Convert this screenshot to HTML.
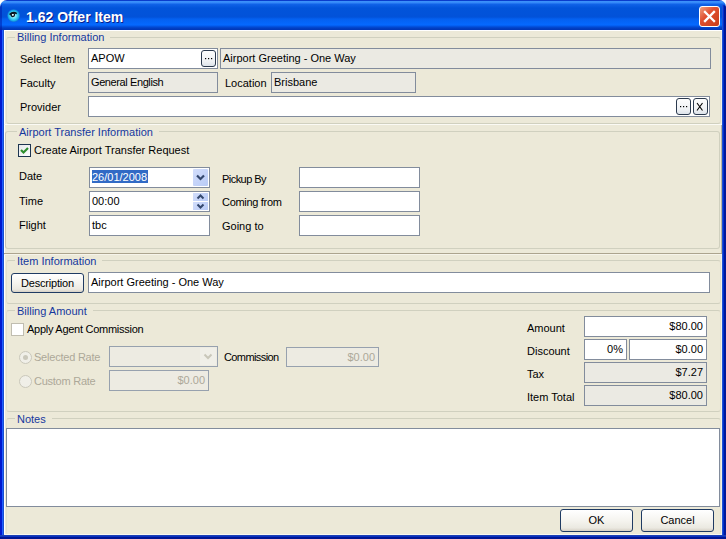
<!DOCTYPE html>
<html><head><meta charset="utf-8">
<style>
*{box-sizing:border-box;margin:0;padding:0}
html,body{width:726px;height:539px;overflow:hidden;background:#fff}
body{position:relative;font-family:"Liberation Sans",sans-serif;font-size:11px;color:#000}
.a{position:absolute}
.t{position:absolute;line-height:13px;white-space:nowrap}
#title{left:0;top:0;width:726px;height:31px;border-radius:7px 7px 0 0;
background:linear-gradient(to bottom,#0a3ccc 0px,#0a3ccc 1px,#3d93fb 1px,#3386f8 3px,#1163e8 4px,#0254da 8px,#0252d9 17px,#0460f0 19px,#0569ff 25px,#0358e8 26px,#0240c4 28px,#0035b5 30px,#0035b5 31px)}
#lb{left:0;top:30px;width:4px;height:509px;background:linear-gradient(to right,#0019cf 0,#0019cf 2px,#1f5fff 2px,#1f5fff 3px,#1a4fd0 3px)}
#rb{left:722px;top:5px;width:4px;height:534px;border-radius:0 3px 0 0;background:linear-gradient(to right,#2050d0 0,#2050d0 1px,#0030d0 1px,#0030d0 2px,#00189a 2px)}
#bb{left:0;top:535px;width:726px;height:4px;background:linear-gradient(to bottom,#1c40b4 0,#1c40b4 1px,#0a32c0 1px,#0a32c0 2px,#001594 2px)}
#client{left:4px;top:30px;width:718px;height:505px;background:#ece9d8}
.panel{position:absolute;left:4px;width:718px;border-top:1px solid #fff;border-left:1px solid #fff;border-bottom:1px solid #aca899;border-right:1px solid #aca899}
.gb{position:absolute;border:1px solid #d0d0bf;border-radius:3px}
.gt{position:absolute;line-height:13px;color:#15389e;background:#ece9d8;padding:0 6px 0 2px;white-space:nowrap}
.tb{position:absolute;background:#fff;border:1px solid #828c9c;line-height:13px;padding:3px 0 0 2px;white-space:nowrap}
.ro{background:#ebeae3}
.dis{background:#edebe2;color:#aca899;border-color:#97a1ae}
.r{text-align:right;padding:3px 3px 0 0}
.btn{position:absolute;border:1px solid #1f3b63;border-radius:3px;background:linear-gradient(to bottom,#fff 0%,#f5f4ef 50%,#ebe9e1 85%,#d6d0c5 100%);text-align:center;line-height:13px}
.sb{position:absolute;border:1px solid #2b3a4e;border-radius:3px;background:linear-gradient(to bottom,#fdfdfd,#eef1f4 70%,#dde3ea)}
.sb svg{position:absolute;left:0;top:0}
</style></head><body>
<div id="title" class="a"></div>
<div id="lb" class="a"></div>
<div id="rb" class="a"></div>
<div id="bb" class="a"></div>
<div id="client" class="a"></div>
<div class="a" style="left:0;top:5px;width:2px;height:25px;background:rgba(0,20,160,0.45);border-radius:2px 0 0 0"></div>

<!-- title content -->
<svg class="a" style="left:5px;top:7px" width="17" height="17" viewBox="0 0 17 17">
<defs><radialGradient id="ig" cx="50%" cy="50%" r="50%"><stop offset="0" stop-color="#d8fcff"/><stop offset="0.45" stop-color="#5ee0fa"/><stop offset="0.8" stop-color="#18b0ea"/><stop offset="1" stop-color="#1070d8"/></radialGradient></defs>
<circle cx="8.6" cy="8.6" r="6.4" fill="url(#ig)"/>
<path d="M4.6 7.6 Q8 4.2 11.8 6.6" stroke="#0a1420" stroke-width="1.5" fill="none"/>
<circle cx="7.8" cy="7.8" r="1.7" fill="none" stroke="#0a1420" stroke-width="1.3"/><circle cx="7.8" cy="7.8" r="0.8" fill="#fff"/>
</svg>
<div class="t" style="left:26px;top:9px;font-size:14px;line-height:17px;font-weight:bold;color:#fff;letter-spacing:0px;text-shadow:1px 1px 0 #0a1e8a">1.62 Offer Item</div>
<div class="a" style="left:699px;top:6px;width:21px;height:21px;border:1px solid #fff;border-radius:3px;background:linear-gradient(135deg,#f0a080 0%,#e05030 40%,#c83c18 100%)">
<svg width="19" height="19" viewBox="0 0 19 19" style="position:absolute;left:0;top:0"><path d="M5 5 L14 14 M14 5 L5 14" stroke="#fff" stroke-width="2.3" stroke-linecap="square"/></svg>
</div>

<!-- panels -->
<div class="a" style="left:4px;top:30px;width:718px;height:1px;background:#fff"></div>
<div class="a" style="left:4px;top:30px;width:1px;height:505px;background:#fff"></div>
<div class="a" style="left:721px;top:31px;width:1px;height:504px;background:#f2f0e6"></div>
<div class="a" style="left:721px;top:124px;width:1px;height:130px;background:#b8b4a2"></div>
<div class="a" style="left:4px;top:124px;width:718px;height:1px;background:#fbfaf4"></div>
<div class="a" style="left:4px;top:253px;width:718px;height:1px;background:#aca48e"></div>
<div class="a" style="left:4px;top:254px;width:718px;height:1px;background:#f6f4ea"></div>
<div class="a" style="left:4px;top:534px;width:718px;height:1px;background:#f8f7f0"></div>

<!-- Billing Information -->
<div class="gb" style="left:6px;top:37px;width:715px;height:87px;border-left-color:#e2dfcd;border-right-color:#e2dfcd"></div>
<div class="gt" style="left:15px;top:31px">Billing Information</div>
<div class="t" style="left:20px;top:53px">Select Item</div>
<div class="t" style="left:20px;top:77px">Faculty</div>
<div class="t" style="left:20px;top:101px">Provider</div>
<div class="tb" style="left:88px;top:48px;width:130px;height:21px">APOW</div>
<div class="sb" style="left:201px;top:50px;width:15px;height:17px"><svg width="13" height="15" viewBox="0 0 13 15"><rect x="3" y="7" width="1.2" height="1.2" fill="#000"/><rect x="6" y="7" width="1.2" height="1.2" fill="#000"/><rect x="9" y="7" width="1.2" height="1.2" fill="#000"/></svg></div>
<div class="tb ro" style="left:220px;top:48px;width:491px;height:21px">Airport Greeting - One Way</div>
<div class="tb ro" style="left:88px;top:72px;width:130px;height:21px"><span style="letter-spacing:-0.4px">General English</span></div>
<div class="t" style="left:225px;top:77px">Location</div>
<div class="tb ro" style="left:271px;top:72px;width:145px;height:21px">Brisbane</div>
<div class="tb" style="left:88px;top:96px;width:622px;height:21px"></div>
<div class="sb" style="left:676px;top:98px;width:15px;height:17px"><svg width="13" height="15" viewBox="0 0 13 15"><rect x="3" y="7" width="1.2" height="1.2" fill="#000"/><rect x="6" y="7" width="1.2" height="1.2" fill="#000"/><rect x="9" y="7" width="1.2" height="1.2" fill="#000"/></svg></div>
<div class="sb" style="left:693px;top:98px;width:15px;height:17px"><svg width="13" height="15" viewBox="0 0 13 15"><path d="M3 4 L8.5 11.5 M8.5 4 L3 11.5" stroke="#000" stroke-width="1.1" fill="none"/></svg></div>

<!-- Airport Transfer -->
<div class="gb" style="left:5px;top:131px;width:715px;height:118px;border-left-color:#c8c2b4"></div>
<div class="gt" style="left:17px;top:126px">Airport Transfer Information</div>
<div class="a" style="left:18px;top:144px;width:13px;height:13px;border:1px solid #1d3550;background:linear-gradient(135deg,#e6e8ea,#fdfefe)">
<svg width="11" height="11" viewBox="0 0 11 11" style="position:absolute;left:0;top:0"><path d="M2 5 L4.5 7.5 L9 3" stroke="#2e8f2e" stroke-width="2.2" fill="none"/></svg></div>
<div class="t" style="left:34px;top:144px">Create Airport Transfer Request</div>
<div class="t" style="left:19px;top:170px">Date</div>
<div class="t" style="left:19px;top:195px">Time</div>
<div class="t" style="left:19px;top:219px">Flight</div>
<div class="tb" style="left:89px;top:167px;width:121px;height:21px"><div class="a" style="left:2px;top:2px;width:56px;height:13px;background:#316ac5"></div><span style="position:relative;color:#fff">26/01/2008</span></div>
<div class="a" style="left:193px;top:169px;width:15px;height:17px;border-radius:1px;background:linear-gradient(135deg,#d2ddfb,#b9cbf6)">
<svg width="15" height="17" viewBox="0 0 15 17" class="a" style="left:0;top:0"><path d="M4 6.5 L7.5 10 L11 6.5" stroke="#34486e" stroke-width="2.2" fill="none"/></svg></div>
<div class="tb" style="left:89px;top:191px;width:121px;height:21px">00:00</div>
<div class="a" style="left:193px;top:193px;width:15px;height:8px;background:linear-gradient(135deg,#d2ddfb,#b9cbf6)">
<svg width="15" height="8" viewBox="0 0 15 8" class="a" style="left:0;top:0"><path d="M4.5 5.5 L7.5 2.5 L10.5 5.5" stroke="#34486e" stroke-width="2" fill="none"/></svg></div>
<div class="a" style="left:193px;top:202px;width:15px;height:8px;background:linear-gradient(135deg,#d2ddfb,#b9cbf6)">
<svg width="15" height="8" viewBox="0 0 15 8" class="a" style="left:0;top:0"><path d="M4.5 2.5 L7.5 5.5 L10.5 2.5" stroke="#34486e" stroke-width="2" fill="none"/></svg></div>
<div class="tb" style="left:89px;top:215px;width:121px;height:21px">tbc</div>
<div class="t" style="left:222px;top:173px;letter-spacing:-0.55px">Pickup By</div>
<div class="t" style="left:222px;top:196px;letter-spacing:-0.3px">Coming from</div>
<div class="t" style="left:222px;top:220px">Going to</div>
<div class="tb" style="left:299px;top:167px;width:121px;height:21px"></div>
<div class="tb" style="left:299px;top:191px;width:121px;height:21px"></div>
<div class="tb" style="left:299px;top:215px;width:121px;height:21px"></div>

<!-- Item Information -->
<div class="gb" style="left:6px;top:260px;width:715px;height:44px;border-left-color:#e2dfcd;border-right-color:#e2dfcd"></div>
<div class="gt" style="left:15px;top:255px">Item Information</div>
<div class="btn" style="left:11px;top:273px;width:73px;height:20px;padding-top:3px;letter-spacing:-0.2px">Description</div>
<div class="tb" style="left:88px;top:272px;width:622px;height:21px">Airport Greeting - One Way</div>

<!-- Billing Amount -->
<div class="gb" style="left:6px;top:310px;width:715px;height:102px;border-left-color:#e2dfcd;border-right-color:#e2dfcd"></div>
<div class="gt" style="left:15px;top:305px">Billing Amount</div>
<div class="a" style="left:11px;top:323px;width:13px;height:13px;border:1px solid #c0bdb0;background:#fff"></div>
<div class="t" style="left:27px;top:323px;letter-spacing:-0.27px">Apply Agent Commission</div>
<div class="t" style="left:34px;top:351px;color:#aca899;letter-spacing:-0.22px">Selected Rate</div>
<div class="t" style="left:34px;top:375px;color:#aca899;letter-spacing:-0.25px">Custom Rate</div>
<div class="a" style="left:19px;top:351px;width:13px;height:13px;border:1px solid #cac8bb;border-radius:50%;background:#f0efe8"><div class="a" style="left:3px;top:3px;width:5px;height:5px;border-radius:50%;background:#cac8bb"></div></div>
<div class="a" style="left:19px;top:375px;width:13px;height:13px;border:1px solid #cac8bb;border-radius:50%;background:#f0efe8"></div>
<div class="tb dis" style="left:109px;top:346px;width:109px;height:21px"></div>
<div class="a" style="left:200px;top:348px;width:16px;height:17px;background:#f0efe8;border-radius:1px">
<svg width="16" height="17" viewBox="0 0 16 17" class="a" style="left:0;top:0"><path d="M4.5 6.5 L8 10 L11.5 6.5" stroke="#c9c7ba" stroke-width="2" fill="none"/></svg></div>
<div class="t" style="left:224px;top:351px;letter-spacing:-0.6px">Commission</div>
<div class="tb dis r" style="left:286px;top:347px;width:93px;height:20px">$0.00</div>
<div class="tb dis r" style="left:109px;top:370px;width:100px;height:21px">$0.00</div>
<div class="t" style="left:527px;top:322px">Amount</div>
<div class="t" style="left:527px;top:345px">Discount</div>
<div class="t" style="left:527px;top:368px">Tax</div>
<div class="t" style="left:527px;top:391px">Item Total</div>
<div class="tb r" style="left:584px;top:316px;width:123px;height:21px">$80.00</div>
<div class="tb r" style="left:584px;top:339px;width:43px;height:21px">0%</div>
<div class="tb r" style="left:629px;top:339px;width:78px;height:21px">$0.00</div>
<div class="tb ro r" style="left:584px;top:362px;width:123px;height:21px">$7.27</div>
<div class="tb ro r" style="left:584px;top:385px;width:123px;height:21px">$80.00</div>

<!-- Notes -->
<div class="gb" style="left:6px;top:418px;width:715px;height:117px;border-left-color:#e2dfcd;border-right-color:#e2dfcd;border-bottom-color:transparent"></div>
<div class="gt" style="left:15px;top:413px">Notes</div>
<div class="tb" style="left:6px;top:428px;width:714px;height:79px"></div>
<div class="btn" style="left:560px;top:509px;width:73px;height:23px;padding-top:4px">OK</div>
<div class="btn" style="left:641px;top:509px;width:73px;height:23px;padding-top:4px">Cancel</div>
</body></html>
